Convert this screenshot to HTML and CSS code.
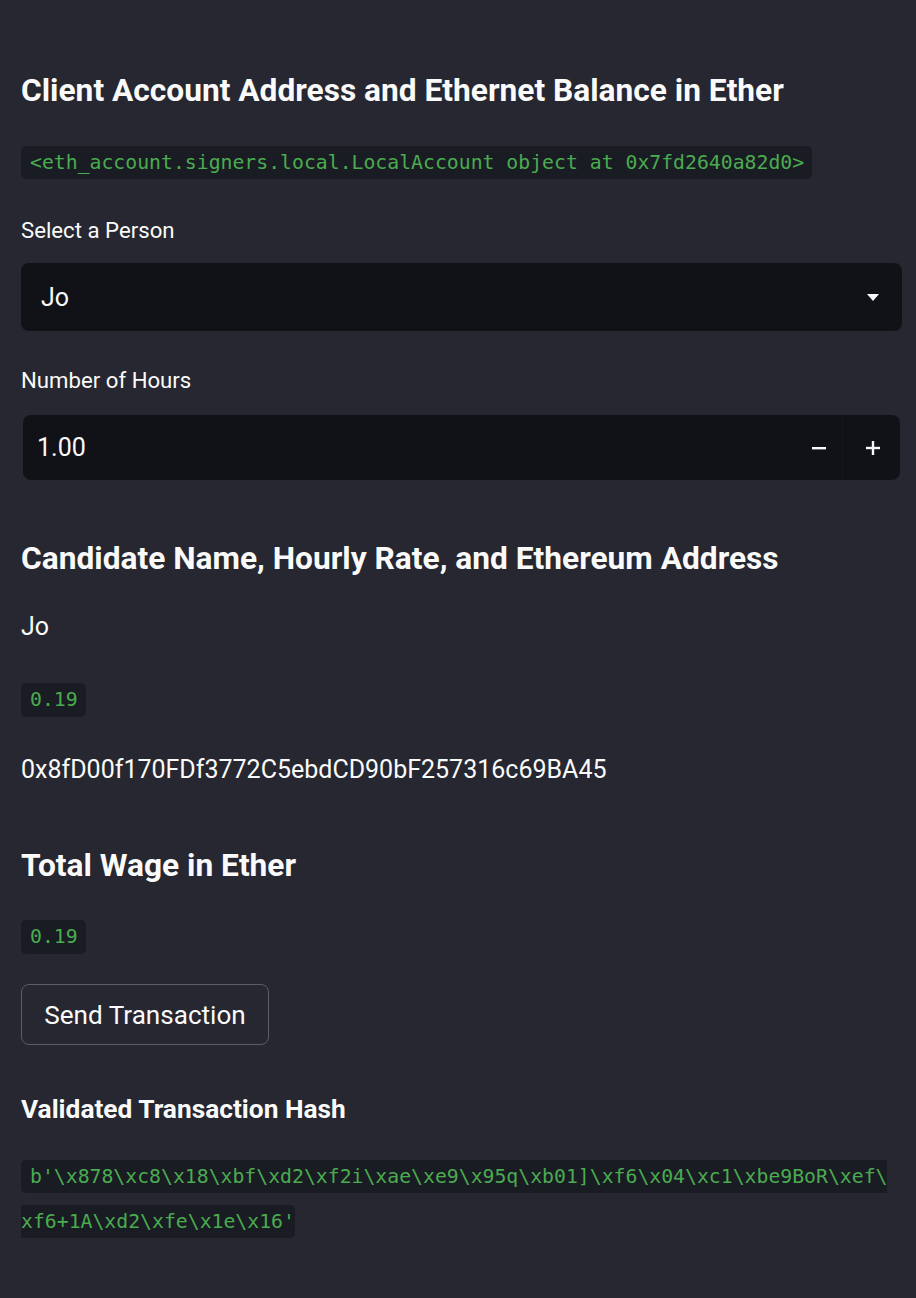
FILE: index.html
```html
<!DOCTYPE html>
<html lang="en">
<head>
<meta charset="utf-8">
<title>Payment App</title>
<link rel="stylesheet" href="styles.css">
</head>
<body>
<main class="main">
  <h3 class="heading h-first">Client Account Address and Ethernet Balance in Ether</h3>
  <div class="code-row c-account"><code class="code">&lt;eth_account.signers.local.LocalAccount object at 0x7fd2640a82d0&gt;</code></div>

  <label class="label l-select">Select a Person</label>
  <div class="select">
    <span class="select-value">Jo</span>
    <svg class="caret" width="12" height="7" viewBox="0 0 12 7"><path d="M0 0h12L6 7z" fill="#fafafa"/></svg>
  </div>

  <label class="label l-hours">Number of Hours</label>
  <div class="number">
    <span class="number-value">1.00</span>
    <button class="step step-minus" type="button"><svg width="14" height="14" viewBox="0 0 14 14"><rect x="0" y="6" width="14" height="2.4" fill="#fafafa"/></svg></button>
    <button class="step step-plus" type="button"><svg width="14" height="14" viewBox="0 0 14 14"><rect x="0" y="5.8" width="14" height="2.4" fill="#fafafa"/><rect x="5.8" y="0" width="2.4" height="14" fill="#fafafa"/></svg></button>
  </div>

  <h3 class="heading h-candidate">Candidate Name, Hourly Rate, and Ethereum Address</h3>
  <p class="text t-name">Jo</p>
  <div class="code-row c-rate"><code class="code">0.19</code></div>
  <p class="text t-address">0x8fD00f170FDf3772C5ebdCD90bF257316c69BA45</p>

  <h3 class="heading h-wage">Total Wage in Ether</h3>
  <div class="code-row c-wage"><code class="code">0.19</code></div>

  <button class="btn" type="button">Send Transaction</button>

  <h4 class="subheading">Validated Transaction Hash</h4>
  <p class="hash"><code class="code-inline">b'\x878\xc8\x18\xbf\xd2\xf2i\xae\xe9\x95q\xb01]\xf6\x04\xc1\xbe9BoR\xef\<wbr>xf6+1A\xd2\xfe\x1e\x16'</code></p>
</main>
</body>
</html>
```

FILE: styles.css
```css
* { box-sizing: border-box; }

html, body {
  margin: 0;
  padding: 0;
  background: #262730;
}

body {
  color: #fafafa;
  font-family: "Source Sans Pro", Roboto, "Noto Sans", sans-serif;
  min-height: 1298px;
}

.main {
  display: flex;
  flex-direction: column;
  align-items: flex-start;
  padding: 67px 14px 40px 21px;
  width: 916px;
}

.heading {
  margin: 0;
  font-size: 31.7px;
  font-weight: 700;
  line-height: 48px;
  height: 48px;
  white-space: nowrap;
}

.h-candidate { margin-top: 55px; }
.h-wage { margin-top: 54px; }

.code-row { display: flex; }
.c-account { margin-top: 31px; }
.c-rate { margin-top: 38px; }
.c-wage { margin-top: 30px; }

.code {
  display: inline-block;
  font-family: "DejaVu Sans Mono", "Liberation Mono", monospace;
  font-size: 19.8px;
  color: #4aab50;
  background: #1a1c23;
  border-radius: 5px;
  height: 34px;
  line-height: 34px;
  padding: 0 8px 0 9px;
}

.c-account .code { height: 33px; line-height: 33px; }

.label {
  display: block;
  font-size: 22.2px;
  line-height: 30px;
  height: 30px;
}
.l-select { margin-top: 36px; }
.l-hours { margin-top: 34px; }

.select {
  margin-top: 18px;
  width: 881px;
  height: 68px;
  background: #111217;
  border-radius: 8px;
  display: flex;
  align-items: center;
  justify-content: space-between;
  padding: 0 23px 0 20px;
}

.select-value { font-size: 25px; }
.caret { display: block; }

.number {
  margin-top: 20px;
  margin-left: 2px;
  width: 877px;
  height: 65px;
  background: #111217;
  border-radius: 8px;
  display: flex;
  align-items: center;
  overflow: hidden;
}

.number-value {
  flex: 1;
  font-size: 25px;
  padding-left: 14px;
}

.step {
  width: 54px;
  height: 65px;
  border: 0;
  padding: 0;
  background: transparent;
  display: flex;
  align-items: center;
  justify-content: center;
}
.step svg { display: block; }
.step-minus { border-right: 1px solid #0c0d10; }

.text {
  margin: 0;
  font-size: 25px;
  line-height: 36px;
  height: 36px;
}
.t-name { margin-top: 26px; }
.t-address { margin-top: 35px; }

.btn {
  margin-top: 30px;
  width: 248px;
  height: 61px;
  border: 1.5px solid #5b5c64;
  border-radius: 8px;
  background: #262730;
  color: #fafafa;
  font-family: inherit;
  font-size: 26.1px;
  padding: 0;
}

.subheading {
  margin: 46px 0 0;
  font-size: 26.3px;
  font-weight: 700;
  line-height: 36px;
  height: 36px;
}

.hash {
  margin: 28px 0 0;
  width: 876px;
  line-height: 44px;
  word-break: break-all;
  overflow-wrap: anywhere;
}

.code-inline {
  font-family: "DejaVu Sans Mono", "Liberation Mono", monospace;
  font-size: 19.8px;
  color: #4aab50;
  background: #1a1c23;
  border-radius: 5px;
  padding: 5px 0 5px 9px;
}
```
